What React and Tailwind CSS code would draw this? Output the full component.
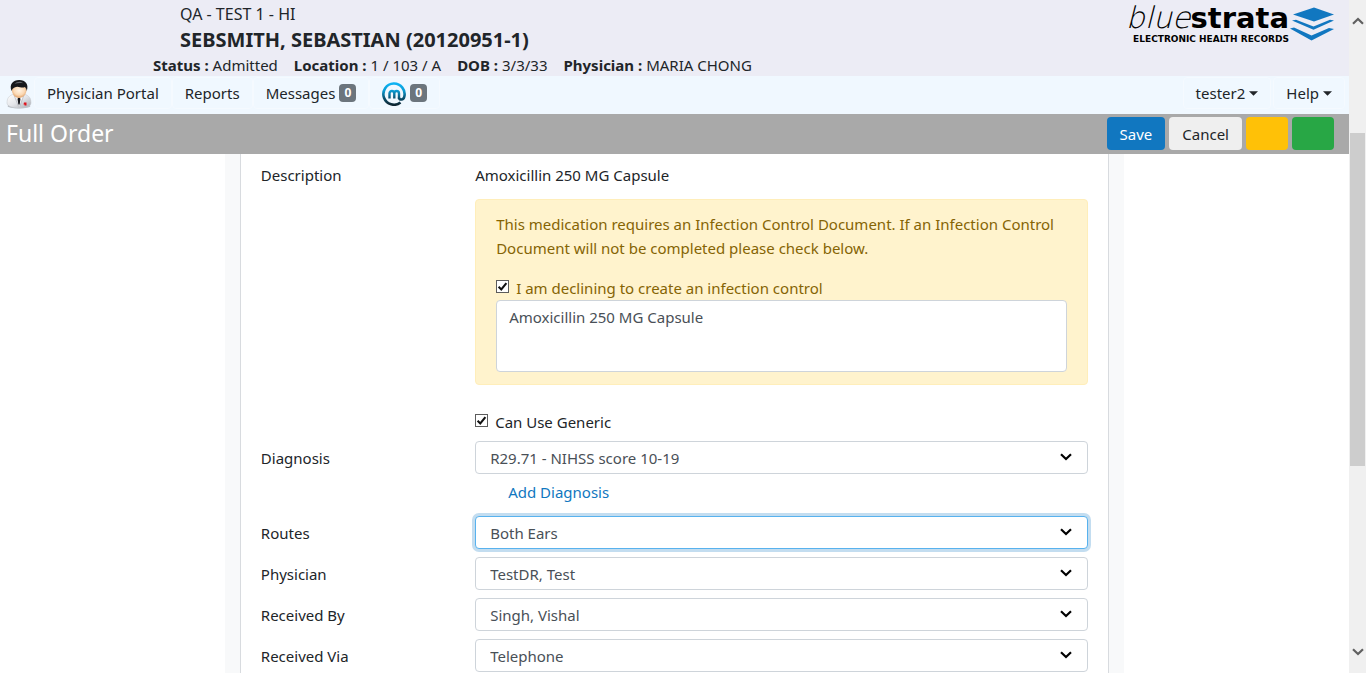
import React from "react";

function Chevron({ className }) {
  return (
    <svg viewBox="0 0 12 8" className={className} fill="none" stroke="currentColor" strokeWidth="2.2" aria-hidden="true">
      <path d="M1 1.2 L6 6 L11 1.2" />
    </svg>
  );
}

function Caret() {
  return (
    <svg viewBox="0 0 10 5" className="h-[5px] w-[9px]" aria-hidden="true">
      <path d="M0 0 H10 L5 5 Z" fill="#212529" />
    </svg>
  );
}

function DoctorIcon() {
  return (
    <svg viewBox="0 0 26 30" className="h-[30px] w-[26px]" aria-hidden="true">
      <defs>
        <linearGradient id="coat" x1="0" y1="0" x2="1" y2="1">
          <stop offset="0" stopColor="#ffffff" />
          <stop offset="0.5" stopColor="#e4e6ea" />
          <stop offset="1" stopColor="#a6a9b0" />
        </linearGradient>
        <radialGradient id="face" cx="0.5" cy="0.4" r="0.6">
          <stop offset="0" stopColor="#fff4e6" />
          <stop offset="0.6" stopColor="#fbd9b4" />
          <stop offset="1" stopColor="#dd9c63" />
        </radialGradient>
      </defs>
      <ellipse cx="13" cy="27" rx="11.5" ry="2.5" fill="#8b8e94" opacity="0.55" />
      <path d="M8 15 C3 16.500 1 19 1 24 C1 27.500 7 29 13 29 C19 29 25 27.500 25 24 C25 19 23 16.500 18 15 Z" fill="url(#coat)" stroke="#c3c6cb" strokeWidth="0.5" />
      <path d="M10 16 L13 28 L17 16 Z" fill="#ffffff" />
      <path d="M11.800 19 H14.200 L14.400 20.500 L13.800 24.500 L13 26.500 L12.200 24.500 L11.600 20.500 Z" fill="#15171c" />
      <path d="M8 16 L12.500 27.500 M18 16 L13.800 27.500" stroke="#b4b8be" strokeWidth="0.7" fill="none" />
      <path d="M5.800 10 C5.800 15.500 9 19 13 19 C17 19 20.600 15.500 20.600 10 C18 5.500 9 5 5.800 10 Z" fill="url(#face)" />
      <path d="M5.500 12 C3 5 7 1 13.200 1 C19.500 1 23 5 20.800 12 C20.500 9.800 19.800 9 18.800 8 C15.500 10 12.500 6.200 8.500 8.500 C6.500 9.500 6.200 10.500 5.500 12 Z" fill="#17181b" />
      <path d="M8.500 4.800 C11 2.200 15 2 17.500 4.300 C14.500 3.800 11.500 4 8.500 4.800 Z" fill="#65676c" />
      <path d="M18 23.500 H20.500 V26.500 H18.500 V25.500 H17.500 Z" fill="#e0131c" />
    </svg>
  );
}

function MIcon() {
  return (
    <svg viewBox="0 0 24 24" className="mt-px size-6" fill="none" aria-hidden="true">
      <defs>
        <linearGradient id="ring" gradientUnits="userSpaceOnUse" x1="0" y1="1" x2="0" y2="23">
          <stop offset="0" stopColor="#0db4f5" />
          <stop offset="0.35" stopColor="#0a9bd3" />
          <stop offset="0.7" stopColor="#0b4f6c" />
          <stop offset="1" stopColor="#0e2430" />
        </linearGradient>
      </defs>
      <path d="M17 17 V11.500 C17 8.200 12.300 8.200 12.300 11.500 V16.500 M12.300 11.500 C12.300 8.200 7.500 8.200 7.500 11.500 V16.500" stroke="url(#ring)" strokeWidth="2.400" />
      <path d="M18.500 20.500 A10.600 10.600 0 1 1 22.200 15 C21.500 18 17 18.500 17 15.500" stroke="url(#ring)" strokeWidth="2.600" />
    </svg>
  );
}

function Logo() {
  return (
    <div className="flex items-start">
      <div className="flex flex-col items-end whitespace-nowrap pt-[2px] text-black">
        <div className="flex items-baseline font-['DejaVu_Sans']">
          <span className="font-['DejaVu_Sans_Light','DejaVu_Sans'] text-[30px] font-extralight italic leading-[31px]">blue</span>
          <span className="text-[29px] font-bold leading-[31px]">strata</span>
        </div>
        <div className="font-['DejaVu_Sans'] text-[9px] font-bold leading-[10px]">ELECTRONIC HEALTH RECORDS</div>
      </div>
      <svg viewBox="0 0 46 34" className="mt-[7px] h-[34px] w-[46px]" fill="#1177c0" aria-hidden="true">
        <path d="M25 0.500 L45 7.500 L25 14.500 L4 7.500 Z" />
        <path d="M3 13.500 L7 12.800 L24.500 19.500 L41 12.800 L45 13.500 L24.500 22.800 Z" />
        <path d="M1 21.500 L5 20.500 L22.500 28.500 L40 21 L45 22 L22.500 33.500 Z" />
      </svg>
    </div>
  );
}

function Fact({ label, value }) {
  return (
    <span>
      <b>{label} :</b> {value}
    </span>
  );
}

function Badge({ children }) {
  return (
    <span className="rounded bg-[#6c757d] px-[5px] text-[12px] font-bold leading-[18px] text-white">{children}</span>
  );
}

function NavLink({ children }) {
  return (
    <a href="#" className="flex h-8 items-center gap-1 rounded border border-[#f5faff] px-3">
      {children}
    </a>
  );
}

function CheckBox({ id, label }) {
  return (
    <div className="flex items-center gap-[7px]">
      <span className="mb-[3px] grid size-[13px]">
        <input id={id} type="checkbox" defaultChecked className="peer col-start-1 row-start-1 size-[13px] appearance-none border border-[#5c5c5c] bg-white" />
        <svg viewBox="0 0 14 14" className="pointer-events-none invisible col-start-1 row-start-1 size-[13px] peer-checked:visible" fill="none" stroke="#111" strokeWidth="2.200" aria-hidden="true">
          <path d="M2.800 7.200 L5.700 10.200 L11.200 3.300" />
        </svg>
      </span>
      <label htmlFor={id}>{label}</label>
    </div>
  );
}

function SelectRow({ id, label, value, focused, children }) {
  return (
    <div className="-mr-[30px] grid grid-cols-[1fr_3fr]">
      <label htmlFor={id} className="pt-[5px]">{label}</label>
      <div className="pr-[30px]">
        <div className="grid">
          <select
            id={id}
            className={
              focused
                ? "col-start-1 row-start-1 h-[33px] w-full appearance-none rounded border border-[#58b2ee] bg-white pl-[14px] text-[#495057] shadow-[0_0_0_3px_#c3ddf0] outline-none"
                : "col-start-1 row-start-1 h-[33px] w-full appearance-none rounded border border-[#ced4da] bg-white pl-[14px] text-[#495057] outline-none"
            }
          >
            <option>{value}</option>
          </select>
          <Chevron className="pointer-events-none col-start-1 row-start-1 mr-4 mt-3 h-2 w-3 justify-self-end text-black" />
        </div>
        {children}
      </div>
    </div>
  );
}

export default function App() {
  return (
    <div className="flex h-screen overflow-hidden bg-white font-['Noto_Sans','Open_Sans',sans-serif] text-[15px] leading-6 text-[#212529]">
      <div className="flex min-w-0 flex-1 flex-col">
        <header className="flex h-[76px] shrink-0 items-start justify-between bg-[#ececf5] pl-[153px] pr-[14px]">
          <div className="pt-[2px]">
            <div className="pl-[27px] text-base">QA - TEST 1 - HI</div>
            <h1 className="pl-[27px] text-xl font-bold leading-[27px]">SEBSMITH, SEBASTIAN (20120951-1)</h1>
            <div className="flex gap-4">
              <Fact label="Status" value="Admitted" />
              <Fact label="Location" value="1 / 103 / A" />
              <Fact label="DOB" value="3/3/33" />
              <Fact label="Physician" value="MARIA CHONG" />
            </div>
          </div>
          <Logo />
        </header>

        <nav className="flex h-[38px] shrink-0 items-start justify-between bg-[#f0f8ff] pl-[6px] pr-1 pt-[1px]">
          <div className="flex items-start">
            <div className="pr-[2px] pt-[2px]"><DoctorIcon /></div>
            <NavLink>Physician Portal</NavLink>
            <NavLink>Reports</NavLink>
            <NavLink>Messages <Badge>0</Badge></NavLink>
            <NavLink><MIcon /> <Badge>0</Badge></NavLink>
          </div>
          <div className="flex items-start gap-[2px]">
            <NavLink>tester2 <Caret /></NavLink>
            <NavLink>Help <Caret /></NavLink>
          </div>
        </nav>

        <div className="flex h-10 shrink-0 items-start justify-between bg-[#a9a9a9] pl-[6px] pr-[15px] pt-[3px]">
          <h2 className="text-[23px] leading-8 text-white">Full Order</h2>
          <div className="flex gap-1">
            <button type="button" className="h-[33px] rounded bg-[#1177c0] px-[13px] text-white">Save</button>
            <button type="button" className="h-[33px] rounded bg-[#efefef] px-[13px]">Cancel</button>
            <button type="button" aria-label="Hold" className="h-[33px] w-[42px] rounded bg-[#ffc107]" />
            <button type="button" aria-label="Approve" className="h-[33px] w-[42px] rounded bg-[#28a745]" />
          </div>
        </div>

        <main className="flex min-h-0 flex-1 justify-center overflow-hidden">
          <div className="w-2/3 bg-[#f8f9fa] px-[15px]">
            <form className="min-h-full border-x border-[#d8dbdf] bg-white px-5 pt-[9px]">
              <div className="-mr-[30px] grid grid-cols-[1fr_3fr]">
                <div>Description</div>
                <div className="pr-[30px]">
                  <div>Amoxicillin 250 MG Capsule</div>
                  <div className="mt-3 rounded border border-[#ffeeba] bg-[#fff3cd] px-5 py-3 text-[#856404]">
                    <p className="mb-4">
                      This medication requires an Infection Control Document. If an Infection Control Document will not be completed please check below.
                    </p>
                    <CheckBox id="decline" label="I am declining to create an infection control" />
                    <textarea aria-label="Reason for declining" defaultValue="Amoxicillin 250 MG Capsule" className="block h-[72px] w-full resize-none rounded border border-[#ced4da] bg-white px-3 py-1 text-[#495057] outline-none" />
                  </div>
                  <div className="mb-[7px] mt-[25px]">
                    <CheckBox id="generic" label="Can Use Generic" />
                  </div>
                </div>
              </div>
              <div className="flex flex-col gap-2">
                <SelectRow id="diagnosis" label="Diagnosis" value="R29.71 - NIHSS score 10-19">
                  <a href="#" className="mb-1 ml-[33px] mt-[6px] block w-fit text-[#1177c0]">Add Diagnosis</a>
                </SelectRow>
                <SelectRow id="routes" label="Routes" value="Both Ears" focused />
                <SelectRow id="physician" label="Physician" value="TestDR, Test" />
                <SelectRow id="received-by" label="Received By" value="Singh, Vishal" />
                <SelectRow id="received-via" label="Received Via" value="Telephone" />
              </div>
            </form>
          </div>
        </main>
      </div>

      <div className="flex w-[17px] shrink-0 flex-col items-center bg-[#f0f0f0] py-[17px]" aria-hidden="true">
        <Chevron className="h-2 w-3 shrink-0 rotate-180 text-[#606060]" />
        <div className="h-[108px] shrink" />
        <div className="h-[333px] w-[15px] bg-[#cdcdcd]" />
        <Chevron className="mt-auto h-2 w-3 shrink-0 text-[#606060]" />
      </div>
    </div>
  );
}
